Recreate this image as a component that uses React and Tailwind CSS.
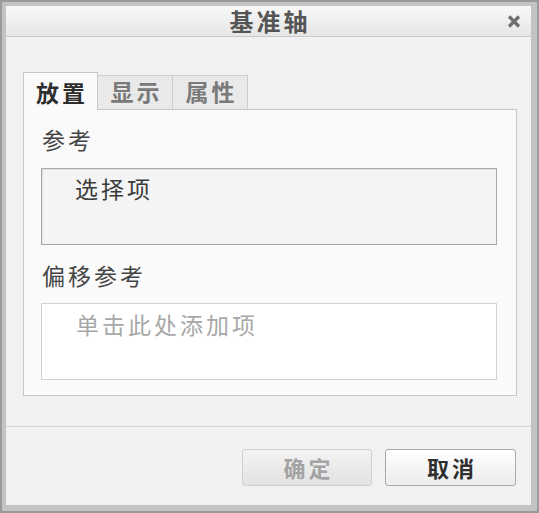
import { useState } from 'react';

const font = { fontFamily: '"Noto Sans CJK SC", "Noto Sans", sans-serif' };

const tabs = ['放置', '显示', '属性'];

function Field({ text, muted }) {
  return (
    <div
      className={
        muted
          ? 'ml-[17px] mr-[19px] h-[77px] border border-[#d2d2d2] bg-white pl-[34px] pt-[5px]'
          : 'ml-[17px] mr-[19px] h-[77px] border border-[#a9a9a9] bg-[#f4f4f4] pl-[33px] pt-[4px] shadow-[inset_1px_1px_0_#e2e2e2]'
      }
    >
      <div
        className={
          muted
            ? 'text-[23px] leading-[30px] tracking-[3px] text-[#a8a8a8]'
            : 'text-[23px] leading-[30px] tracking-[3px] text-[#3a3a3a]'
        }
      >
        {text}
      </div>
    </div>
  );
}

export default function App() {
  const [active, setActive] = useState(0);

  return (
    <div style={font} className="h-[513px] w-[539px] border-2 border-[#9a9a9a] bg-[#c3c3c3] pb-[6px] pl-[4px] pr-[6px] pt-[4px]">
      <div className="flex h-full flex-col bg-[#f1f1f1]">
        {/* title bar */}
        <div className="relative flex h-[31px] items-center justify-center border-b border-[#c9c9c9] bg-gradient-to-b from-[#f8f8f8] to-[#e6e6e6]">
          <span className="pl-[3px] text-[24px] font-bold leading-none tracking-[3px] text-[#555]">
            基准轴
          </span>
          <svg
            className="absolute right-[10px] top-[9px]"
            width="14"
            height="13"
            viewBox="0 0 14 13"
          >
            <path
              d="M2 1.5 L12 11.5 M12 1.5 L2 11.5"
              stroke="#6e6e6e"
              strokeWidth="3.2"
              strokeLinecap="butt"
            />
          </svg>
        </div>

        {/* tabs + panel */}
        <div className="ml-[17px] mr-[14px] mt-[35px]">
          <div className="flex items-end">
            {tabs.map((t, i) =>
              i === active ? (
                <button
                  key={t}
                  onClick={() => setActive(i)}
                  className="relative z-10 -mb-px -ml-px flex h-[38px] w-[75px] items-center justify-center border border-b-0 border-[#c8c8c8] bg-[#fafafa] pt-[1px] text-[23px] font-bold tracking-[3px] text-[#2e2e2e] first:ml-0"
                >
                  <span className="pl-[3px]">{t}</span>
                </button>
              ) : (
                <button
                  key={t}
                  onClick={() => setActive(i)}
                  className="-ml-px flex h-[34px] w-[76px] items-center justify-center border border-b-0 border-[#cdcdcd] bg-[#e9e9e9] pb-[2px] text-[23px] font-bold tracking-[3px] text-[#7a7a7a] first:ml-0"
                >
                  <span className="pl-[3px]">{t}</span>
                </button>
              )
            )}
          </div>
          <div className="h-[287px] border border-[#c8c8c8] bg-[#fafafa] pt-[14px]">
            <div className="pl-[18px] text-[23px] leading-[30px] tracking-[3px] text-[#444]">
              参考
            </div>
            <div className="mt-[14px]">
              <Field text="选择项" />
            </div>
            <div className="mt-[15px] pl-[18px] text-[23px] leading-[30px] tracking-[3px] text-[#444]">
              偏移参考
            </div>
            <div className="mt-[13px]">
              <Field text="单击此处添加项" muted />
            </div>
          </div>
        </div>

        {/* footer */}
        <div className="mt-[30px] border-t border-[#d6d6d6] shadow-[inset_0_1px_0_#fbfbfb]" />
        <div className="mr-[15px] mt-[22px] flex justify-end gap-[13px]">
          <button
            disabled
            className="flex h-[37px] w-[130px] items-center justify-center rounded-[3px] border border-[#d0d0d0] bg-gradient-to-b from-[#f3f3f3] to-[#e3e3e3] text-[22px] font-bold tracking-[3px] text-[#a3a3a3]"
          >
            <span className="pl-[3px]">确定</span>
          </button>
          <button className="flex h-[37px] w-[131px] items-center justify-center rounded-[3px] border border-[#a9a9a9] bg-gradient-to-b from-white to-[#ebebeb] text-[22px] font-bold tracking-[3px] text-[#2f2f2f]">
            <span className="pl-[3px]">取消</span>
          </button>
        </div>
      </div>
    </div>
  );
}
